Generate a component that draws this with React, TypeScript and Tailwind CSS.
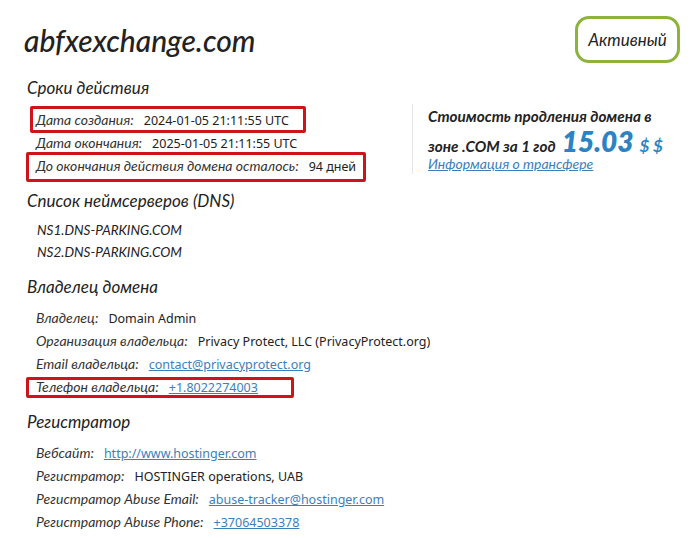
import React from "react";

const Row = ({ l, v, link }: { l: string; v: string; link?: boolean }) => (
  <div className="flex items-baseline h-[23px] leading-[23px]">
    <span className="italic text-[14px] text-[#333]">{l}</span>
    <span className={`ml-[10px] text-[12.5px] ${link ? "text-[#3b80bb] underline" : "text-[#222]"} font-['Noto_Sans',sans-serif]`}>{v}</span>
  </div>
);

export default function App() {
  return (
    <div className="relative w-[694px] h-[538px] bg-white font-['Lato',sans-serif] overflow-hidden">
      <div className="flex justify-between items-start pt-[16px] pl-[24px] pr-[14px]">
        <h1 className="italic text-[30px] font-medium text-[#222] mt-[4px] leading-[40px]">abfxexchange.com</h1>
        <div className="border-[3px] border-[#8db33a] rounded-[14px] w-[105px] h-[47px] flex items-center justify-center italic text-[17px] text-[#222]">
          Активный
        </div>
      </div>

      <div className="flex mt-[13px]">
        <div className="pl-[27px] w-[412px]">
          <h2 className="italic text-[17px] text-[#222] leading-[24px]">Сроки действия</h2>
          <div className="pl-[9px] mt-[8px]">
            <Row l="Дата создания:" v="2024-01-05 21:11:55 UTC" />
            <Row l="Дата окончания:" v="2025-01-05 21:11:55 UTC" />
            <Row l="До окончания действия домена осталось:" v="94 дней" />
          </div>
        </div>
        <div className="mt-[28px] h-[70px] border-l border-[#e6e6e6] pl-[15px]">
          <div className="italic font-bold text-[15.3px] text-[#222] leading-[24px]">Стоимость продления домена в</div>
          <div className="flex items-baseline italic font-bold text-[15.3px] text-[#222] leading-[26px]">
            <span>зоне .COM за 1 год</span>
            <span className="ml-[6px] text-[28px] text-[#2c83c4] font-extrabold leading-[26px]">15.03</span>
            <span className="ml-[6px] text-[17px] text-[#2c83c4]">$ $</span>
          </div>
          <div className="italic text-[14px] text-[#3b80bb] underline leading-[20px] -mt-[5px]">Информация о трансфере</div>
        </div>
      </div>

      <div className="pl-[27px]">
        <h2 className="italic text-[17px] text-[#222] leading-[24px] mt-[12px]">Список неймсерверов (DNS)</h2>
        <div className="pl-[10px] mt-[6px] italic text-[13.5px] text-[#222]">
          <div className="h-[22px] leading-[22px]">NS1.DNS-PARKING.COM</div>
          <div className="h-[22px] leading-[22px]">NS2.DNS-PARKING.COM</div>
        </div>

        <h2 className="italic text-[17px] text-[#222] leading-[24px] mt-[12px]">Владелец домена</h2>
        <div className="pl-[9px] mt-[7px]">
          <Row l="Владелец:" v="Domain Admin" />
          <Row l="Организация владельца:" v="Privacy Protect, LLC (PrivacyProtect.org)" />
          <Row l="Email владельца:" v="contact@privacyprotect.org" link />
          <Row l="Телефон владельца:" v="+1.8022274003" link />
        </div>

        <h2 className="italic text-[17px] text-[#222] leading-[24px] mt-[12px]">Регистратор</h2>
        <div className="pl-[9px] mt-[7px]">
          <Row l="Вебсайт:" v="http://www.hostinger.com" link />
          <Row l="Регистратор:" v="HOSTINGER operations, UAB" />
          <Row l="Регистратор Abuse Email:" v="abuse-tracker@hostinger.com" link />
          <Row l="Регистратор Abuse Phone:" v="+37064503378" link />
        </div>
      </div>

      <div className="absolute left-[30px] top-[106px] w-[276px] h-[27px] border-[3px] border-[#d0121b] rounded-[2px]" />
      <div className="absolute left-[26px] top-[152px] w-[340px] h-[30px] border-[3px] border-[#d0121b] rounded-[2px]" />
      <div className="absolute left-[26px] top-[377px] w-[268px] h-[21px] border-[3px] border-[#d0121b] rounded-[2px]" />
    </div>
  );
}
